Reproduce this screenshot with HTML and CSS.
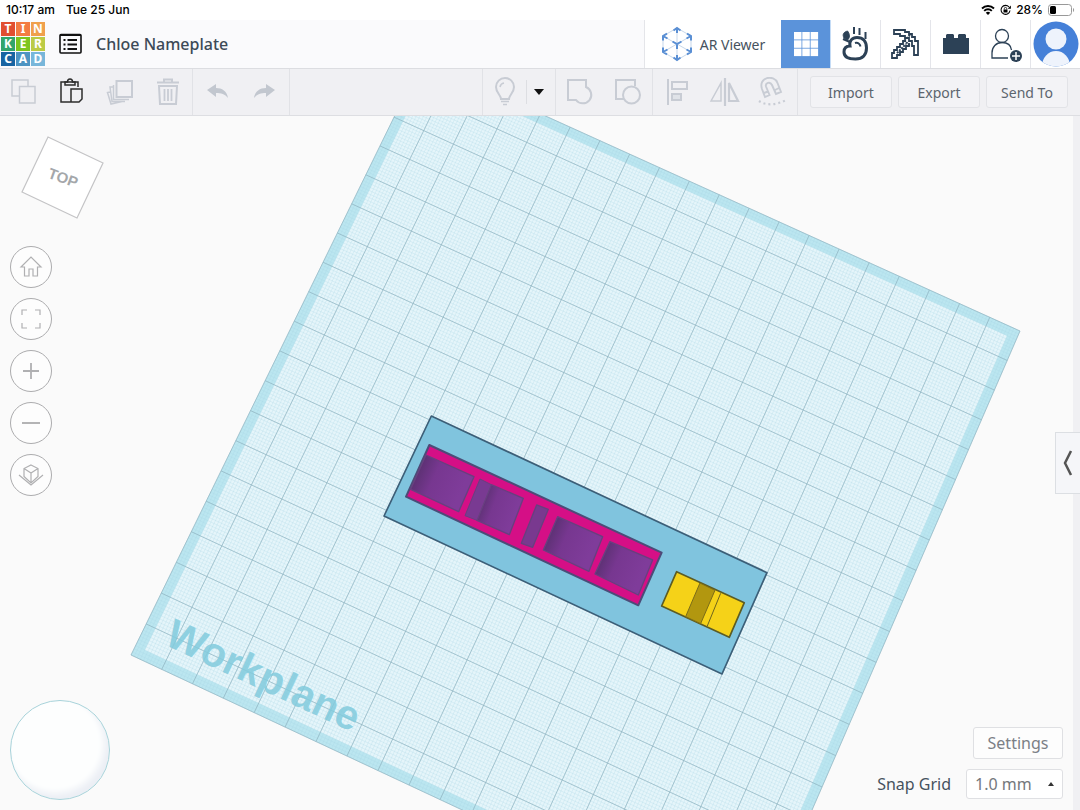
FILE: index.html
```html
<!DOCTYPE html>
<html lang="en">
<head>
<meta charset="UTF-8">
<meta name="viewport" content="width=device-width, initial-scale=1">
<title>Chloe Nameplate</title>
<link rel="stylesheet" href="styles.css">
<script src="workplane.js" defer></script>
</head>
<body>
<div class="status">
    <span>10:17 am</span>
    <span>Tue 25 Jun</span>
    <div class="status-right">
        <svg width="14" height="12" viewBox="0 0 14 12"><path d="M1 4.500a8.500 8.500 0 0 1 12 0M3.200 6.800a5.400 5.400 0 0 1 7.600 0" fill="none" stroke="#000" stroke-width="1.900"/><path d="M4.800 8.700a3.200 3.200 0 0 1 4.400 0L7 11z"/></svg>
        <svg width="11" height="12" viewBox="0 0 11 12"><path d="M9 3a4.500 4.500 0 1 0 1 3.500" fill="none" stroke="#000" stroke-width="1.100"/><path d="M10.900 1.500v3.200H7.700z"/><rect x="3.500" y="5.500" width="4" height="3"/><path d="M4.300 5.500V4.600a1.200 1.200 0 0 1 2.400 0v.9" fill="none" stroke="#000" stroke-width=".8"/></svg>
        <span>28%</span>
        <svg width="27" height="12" viewBox="0 0 27 12"><rect x=".5" y=".5" width="23" height="11" rx="3" fill="none" stroke="#999"/><rect x="2" y="2" width="6" height="8" rx="1.500"/><path d="M25 4v4c1.500-.7 1.500-3.300 0-4z" fill="#999"/></svg>
    </div>
</div>

<header class="header">
    <a class="logo" href="#" aria-label="Tinkercad">
        <span class="t1">T</span><span class="t2">I</span><span class="t3">N</span>
        <span class="t4">K</span><span class="t5">E</span><span class="t6">R</span>
        <span class="t7">C</span><span class="t8">A</span><span class="t9">D</span>
    </a>
    <button class="menu" aria-label="Designs">
        <svg width="24" height="22" viewBox="0 0 24 22" fill="none" stroke="#111"><rect x="1" y="1.500" width="21" height="18.500" rx="1" stroke-width="1.600"/><path d="M1 2h21" stroke-width="2"/><path d="M8.500 7h9.500M8.500 11.500h9.500M8.500 16h9.500" stroke-width="2"/><path d="M4.500 7h2M4.500 11.500h2M4.500 16h2" stroke-width="2"/></svg>
    </button>
    <h1 class="title">Chloe Nameplate</h1>
    <nav class="nav">
        <button class="ar">
            <svg width="32" height="36" viewBox="0 0 32 36" fill="none"><path d="M16 2L30 10v16L16 34L2 26V10zM2 10l14 8 14-8M16 18v16M2 26l14-8 14 8M16 2v16" stroke="#b9cde4" stroke-width=".8"/><path d="M12.500 4.500L16 2l3.500 2.500M16 2v5M2 14.500V10l4-2.300M2 10l4.500 2.500M30 14.500V10l-4-2.300M30 10l-4.500 2.500M2 21.500V26l4 2.300M2 26l4.500-2.500M30 21.500V26l-4 2.300M30 26l-4.500-2.500M12.500 31.500L16 34l3.500-2.500M16 34v-5M11.500 15.500L16 18l4.500-2.500M16 18v5" stroke="#5a8fd4" stroke-width="2"/></svg>
            AR Viewer
        </button>
        <button class="mode active" aria-label="3D Design">
            <svg width="26" height="26" viewBox="0 0 26 26" fill="#fff"><rect x="1" y="1" width="7.500" height="7.500"/><rect x="9.300" y="1" width="7.500" height="7.500"/><rect x="17.600" y="1" width="7.500" height="7.500"/><rect x="1" y="9.300" width="7.500" height="7.500"/><rect x="9.300" y="9.300" width="7.500" height="7.500"/><rect x="17.600" y="9.300" width="7.500" height="7.500"/><rect x="1" y="17.600" width="7.500" height="7.500"/><rect x="9.300" y="17.600" width="7.500" height="7.500"/><rect x="17.600" y="17.600" width="7.500" height="7.500"/></svg>
        </button>
        <button class="mode" aria-label="Sim Lab">
            <svg width="28" height="36" viewBox="0 0 28 36" fill="none" stroke="#2c4156"><path d="M8 20C7 15 10 11.500 15 11.500c6 0 9.500 4 9.500 10.500 0 7-4 11-11 11-7 0-11.500-2-11.500-7 0-4 2.500-6 6-6z" stroke-width="3"/><path d="M13 17c3-1 5 1 5.500 3.500" stroke-width="2"/><path d="M12 1v7M17.500 2v7M23.500 6v7" stroke-width="2"/><path d="M2 12C0 8 2 6 5.500 5 8 8 8 12 5.500 14z" fill="#2c4156"/><path d="M1 13l7 3" stroke-width="2"/></svg>
        </button>
        <button class="mode" aria-label="Blocks">
            <svg width="32" height="32" viewBox="0 0 32 32" fill="none" stroke="#2c4156"><path d="M4 2h11v2h4v2h3v3h3v4h3v14h-4v-9h-2v-5h-3v-3h-4V8h-5V6H4z" stroke-width="1.800"/><path d="M16 13h-3v3h-3v3H7v3H4v3H2v5h5v-3h3v-3h3v-3h3v-3h3v-3" stroke-width="1.800"/><path d="M20 7L13 14M7 25l9-9M14 12l6 6" stroke-width="2" stroke-dasharray="2 1"/></svg>
        </button>
        <button class="mode" aria-label="Bricks">
            <svg width="28" height="22" viewBox="0 0 28 22"><path d="M1 21V5h3V2l1-1h6l1 1v3h4V2l1-1h6l1 1v3h3v16z" fill="#2c4156"/></svg>
        </button>
        <button class="mode" aria-label="Invite people">
            <svg width="34" height="36" viewBox="0 0 34 36"><g fill="none" stroke="#2c4156" stroke-width="1.300"><circle cx="13" cy="10" r="6.500"/><path d="M19 32H3v-5c0-6 4-10.500 10-10.500S22 20 22.500 24"/></g><circle cx="27" cy="30" r="6" fill="#2c4156"/><path d="M23 30h8M27 26v8" stroke="#fff" stroke-width="1.500"/></svg>
        </button>
        <button class="mode" aria-label="Account">
            <svg width="46" height="46" viewBox="0 0 46 46"><defs><clipPath id="face"><circle cx="23" cy="23" r="22.500"/></clipPath></defs><g clip-path="url(#face)"><path d="M0 0h46v46H0z" fill="#4580d8"/><circle cx="23" cy="18" r="10.500" fill="#eef3fc"/><ellipse cx="23" cy="45" rx="14" ry="15" fill="#eef3fc"/></g></svg>
        </button>
    </nav>
</header>

<div class="toolbar">
    <div class="group">
        <button class="tool" aria-label="Copy"><svg width="28" height="28" viewBox="0 0 28 28"><path d="M9 18H2V2h16v6M9.500 8.500H25V25H9.500z"/></svg></button>
        <button class="tool dark" aria-label="Paste"><svg width="28" height="28" viewBox="0 0 28 28"><path d="M13 24H3V4h17v5M13 11h11v10l-3 3h-8z"/><path d="M7 7V4h2.500c0-4 5-4 5 0H17v3z"/></svg></button>
        <button class="tool" aria-label="Duplicate"><svg width="28" height="28" viewBox="0 0 28 28"><path d="M10.500 3H26v16H10.500z" stroke-width="2"/><path d="M7.500 7v14.500H23M7 9H4l2 14.500 13 0M4 14l-2.500.500L5 26l11-2.500"/></svg></button>
        <button class="tool" aria-label="Delete"><svg width="28" height="28" viewBox="0 0 28 28"><path d="M3 4.500h22M10 4V1.500h8V4" stroke-width="2"/><path d="M5 8l1 18h16l1-18z" stroke-width="2"/><path d="M10.500 11v12M14 11v12M17.500 11v12" stroke-width="1.800"/></svg></button>
    </div>
    <div class="group">
        <button class="tool" aria-label="Undo"><svg width="24" height="22" viewBox="0 0 24 22"><path class="solid" d="M2 9l9-6v4c6 0 11 3 12 10-3-4-7-5-12-5v4z"/></svg></button>
        <button class="tool" aria-label="Redo"><svg width="24" height="22" viewBox="0 0 24 22"><path class="solid" d="M22 9l-9-6v4C7 7 2 10 1 17c3-4 7-5 12-5v4z"/></svg></button>
    </div>
    <div class="group spacer"></div>
    <div class="group">
        <button class="tool bulb" aria-label="Show all"><svg width="24" height="30" viewBox="0 0 24 30"><path d="M8 22c0-4-5-6-5-12a9 9 0 0 1 18 0c0 6-5 8-5 12z" stroke-width="2"/><path d="M7 10a5 5 0 0 1 4-4M8 24.500h8M10 27.500h4"/></svg></button>
        <button class="tool drop" aria-label="Visibility options"><svg width="10" height="6" viewBox="0 0 10 6"><path d="M0 0h10L5 6z" fill="#111" stroke="none"/></svg></button>
    </div>
    <div class="group">
        <button class="tool" aria-label="Group"><svg width="28" height="28" viewBox="0 0 28 28"><path d="M2 2h18v7a8.500 8.500 0 1 1-10 13H2z" stroke-width="2"/></svg></button>
        <button class="tool" aria-label="Ungroup"><svg width="28" height="28" viewBox="0 0 28 28"><path d="M10 21H2V2h19v6" stroke-width="2"/><circle cx="17.500" cy="17" r="8.500" stroke-width="2"/></svg></button>
    </div>
    <div class="group">
        <button class="tool" aria-label="Align"><svg width="24" height="28" viewBox="0 0 24 28"><path d="M3 1v26M7 4h15v7H7z" stroke-width="2"/><path d="M7 16h9v6H7z" stroke-width="2" class="half"/></svg></button>
        <button class="tool" aria-label="Mirror"><svg width="32" height="30" viewBox="0 0 32 30"><path d="M2 24L12 6v18z"/><path d="M16 1v28M20 6l9 18h-9z" stroke-width="2.200"/></svg></button>
        <button class="tool" aria-label="Cruise"><svg width="32" height="30" viewBox="0 0 32 30"><path d="M8 20L5 12C1 0 17-3 20.500 6L24 15l-5 2-4-9c-2-4-7-2-6 1.500l3.500 8.500zM7 16l4-1.500M18 13l4-2" stroke-width="1.900"/><path d="M2 24c7 5 18 4 27-1" stroke-width="2.200" stroke-dasharray="2 3"/></svg></button>
    </div>
    <div class="actions">
        <button class="action">Import</button>
        <button class="action">Export</button>
        <button class="action">Send To</button>
    </div>
</div>

<main class="stage">
    <svg class="scene" viewBox="0 116 1080 694" preserveAspectRatio="xMidYMid slice" aria-label="Workplane">
        <defs>
            <linearGradient id="hole" x1="0" y1=".3" x2="1" y2=".7">
                <stop offset=".05" stop-color="#58306f"/>
                <stop offset=".35" stop-color="#773790"/>
                <stop offset=".8" stop-color="#7f3c9a"/>
            </linearGradient>
        </defs>
        <g id="plane"></g>
        <text class="plane-label" transform="translate(163 644) rotate(25)">Workplane</text>
        <!-- nameplate, drawn at three times its size -->
        <g transform="translate(380 400) scale(.3333)" stroke-linejoin="round">
            <path d="M154 48L1161 518 1026 822 12 348z" fill="#80c4de" stroke="#3c5f78" stroke-width="5"/>
            <path d="M148 135L845 458 775 616 78 290z" fill="#d50f86" stroke="#4c4c78" stroke-width="6"/>
            <g fill="url(#hole)" stroke="#67407f" stroke-width="4">
                <path d="M138 165L282 230 236 335 92 268z"/>
                <path d="M334 254L430 295 388 404 291 361z"/>
                <path d="M533 350L668 410 627 514 490 450z"/>
                <path d="M690 425L818 480 775 585 645 522z"/>
            </g>
            <path d="M300 237L334 254 291 361 255 347z" fill="#793a92" stroke="#67407f" stroke-width="3"/>
            <path d="M470 315L505 328 458 442 424 430z" fill="#79398f" stroke="#67407f" stroke-width="4"/>
            <path d="M890 515L1093 608 1048 712 845 618z" fill="#f5d218" stroke="#5c5c24" stroke-width="5"/>
            <path d="M960 549L1005 571 962 671 917 650z" fill="#b2970f" stroke="#7a6b18" stroke-width="3"/>
            <path d="M1022 580L982 678" stroke="#6e641c" stroke-width="3"/>
        </g>
    </svg>

    <div class="controls">
        <button class="cube" aria-label="View cube">
            <svg width="84" height="84" viewBox="0 0 84 84"><path d="M27 1L82 27 56 82 1 56z" fill="#fff" stroke="#c4c4c6" stroke-width="1.200"/><text class="cube-label" x="42" y="47" text-anchor="middle" transform="rotate(20 42 42)">TOP</text></svg>
        </button>
        <button class="round" aria-label="Home view"><svg width="24" height="24" viewBox="0 0 24 24"><path d="M2 12L12 2l10 10h-3.500v9H14v-7h-4v7H5.500v-9z"/></svg></button>
        <button class="round" aria-label="Fit all in view"><svg width="24" height="24" viewBox="0 0 24 24"><path d="M3 8V3h5M16 3h5v5M21 16v5h-5M8 21H3v-5"/></svg></button>
        <button class="round" aria-label="Zoom in"><svg width="24" height="24" viewBox="0 0 24 24"><path d="M4 12h16M12 4v16" stroke-width="1.800"/></svg></button>
        <button class="round" aria-label="Zoom out"><svg width="24" height="24" viewBox="0 0 24 24"><path d="M3 12h18" stroke-width="1.900"/></svg></button>
        <button class="round" aria-label="Perspective view"><svg width="26" height="24" viewBox="0 0 26 24"><path d="M13 2l7 3.500v8L13 20l-7-6.500v-8zM6 5.500L13 10l7-4.500M13 10v10"/><path d="M1 12l12 10 12-10"/></svg></button>
    </div>

    <button class="joystick" aria-label="Move view"></button>

    <div class="rail"></div>
    <button class="expand" aria-label="Show shapes"><svg width="12" height="28" viewBox="0 0 12 28"><path d="M9 2L3 14l6 12" fill="none" stroke="#555" stroke-width="2.500"/></svg></button>

    <div class="settings">
        <button class="settings-button">Settings</button>
        <div class="snap">
            <label for="snap">Snap Grid</label>
            <div class="snap-box">
                <select id="snap"><option>1.0 mm</option></select>
                <svg width="6" height="4" viewBox="0 0 6 4"><path d="M0 4h6L3 0z" fill="#333"/></svg>
            </div>
        </div>
    </div>
</main>
</body>
</html>
```
FILE: styles.css
```css
* {box-sizing: border-box;}
body {margin: 0; height: 100vh; display: flex; flex-direction: column; overflow: hidden; font-family: "Noto Sans", "Open Sans", sans-serif; color: #46525e; background: #fafafa;}
button {font: inherit; color: inherit; background: none; border: 0; padding: 0; margin: 0; display: flex; align-items: center; justify-content: center; cursor: pointer;}
svg {display: block; flex: none;}

/* tablet status line */
.status {height: 20px; display: flex; align-items: center; gap: 11px; padding: 0 5px 0 6px; background: #fff; color: #000; font: 500 12px/20px Inter, sans-serif;}
.status-right {margin-left: auto; display: flex; align-items: center; gap: 5px;}

.header {height: 49px; flex: none; display: flex; align-items: center; background: #fafafc; border-bottom: 1px solid #dcdde1;}
.logo {display: grid; grid-template-columns: repeat(3, 14px); grid-auto-rows: 14px; gap: 1px; padding: 0 1px; text-decoration: none; color: #fff; font-size: 12px; font-weight: 700; line-height: 14px; text-align: center;}
.t1 {background: #e14e31;}
.t2 {background: #f37c42;}
.t3 {background: #f0a04c;}
.t4 {background: #32a56c;}
.t5 {background: #7cc51e;}
.t6 {background: #bccb45;}
.t7 {background: #1864a2;}
.t8 {background: #4e94c2;}
.t9 {background: #78b6da;}
.menu {margin: 0 13px 0 13px;}
.title {margin: 0; font-size: 16px; font-weight: 500; color: #3d4a57;}
.nav {margin-left: auto; align-self: stretch; display: flex; background: #fff; border-left: 1px solid #e4e5e9;}
.ar {width: 136px; gap: 7px; font-size: 14px; white-space: nowrap;}
.mode {width: 50px; border-right: 1px solid #e4e5ea;}
.mode:last-child {width: 49px; border-right: 0;}
.active {background: #5b93da; border-color: #c5dcf6;}

.toolbar {height: 47px; flex: none; display: flex; background: #f0f0f3; border-bottom: 1px solid #dddee2;}
.group {display: flex; border-right: 1px solid #e1e2e6;}
.spacer {flex: 1;}
.tool {width: 48px;}
.tool svg {fill: none; stroke: #c8ccd4; stroke-width: 1.5;}
.tool .solid {fill: #c2c7cf; stroke: none;}
.tool .half {fill: #e0e3e8;}
.dark svg {stroke: #2d2d2d;}
.bulb {width: 43px;}
.drop {width: 29px; height: 24px; align-self: center; border-left: 1px solid #dddee2; padding-right: 4px;}
.actions {display: flex; align-items: center; gap: 6px; padding: 0 12px;}
.action {width: 82px; height: 32px; border: 1px solid #e2e3e7; border-radius: 3px; background: #f3f3f6; font-size: 14px; color: #5c656e;}

.stage {position: relative; flex: 1; min-height: 0;}
.scene {width: 100%; height: 100%;}
.surface {fill: #e5f5fa;}
.band {fill: #bbe6f0;}
.fine {fill: none; stroke: #a6d4e4; stroke-width: 1; opacity: .26;}
.coarse {fill: none; stroke: #90b4c1; stroke-width: 1; opacity: .7;}
.plane-label {font: 700 41px "Liberation Sans", Arial, sans-serif; fill: #82cbdd; opacity: .85;}

.controls {position: absolute; left: 10px; top: 20px; display: flex; flex-direction: column; gap: 10px;}
.cube {margin: 0 0 16px 11px;}
.cube-label {font: 700 15px "Liberation Sans", Arial, sans-serif; fill: #a4a7aa;}
.round {width: 42px; height: 42px; border: 1px solid #acacae; border-radius: 50%; background: #fdfdfd;}
.round svg {fill: none; stroke: #b0b0b2; stroke-width: 1.2;}
.joystick {position: absolute; left: 10px; bottom: 10px; width: 100px; height: 100px; border: 1px solid #a8d3da; border-radius: 50%; background: #fdfefe; box-shadow: inset -5px -6px 6px #eceff5;}
.rail {position: absolute; right: 0; top: 0; bottom: 0; width: 7px; background: #f0f0f3;}
.expand {position: absolute; right: 0; top: 316px; width: 25px; height: 62px; border: 1px solid #dcdfe3; border-right: 0; background: #f5f6f9;}
.settings {position: absolute; right: 17px; bottom: 11px; display: flex; flex-direction: column; align-items: flex-end; gap: 10px; font-size: 16px;}
.settings-button {width: 90px; height: 32px; border: 1px solid #dfe0e3; border-radius: 3px; background: #fdfdfd; color: #7b8086;}
.snap {display: flex; align-items: center; gap: 15px;}
.snap-box {display: flex; align-items: center; width: 97px; height: 30px; padding: 0 8px; border: 1px solid #dfe0e3; border-radius: 3px; background: #fff;}
.snap-box select {flex: 1; min-width: 0; appearance: none; border: 0; padding: 0; background: none; font: inherit; color: #74787d;}
```
FILE: workplane.js
```js
// corners of the plane on screen: top left, top right, bottom right, bottom left
const corners = [[422, 60], [1020, 331], [753, 946], [131, 655]];
const size = 200;

const [[x0, y0], [x1, y1], [x2, y2], [x3, y3]] = corners;
const ax = x1 - x2, ay = y1 - y2;
const bx = x3 - x2, by = y3 - y2;
const cx = x0 - x1 + x2 - x3, cy = y0 - y1 + y2 - y3;
const det = ax * by - bx * ay;
const g = (cx * by - bx * cy) / det;
const h = (ax * cy - cx * ay) / det;

// millimetres on the plane to screen position
function project(mmX, mmY) {
    const u = mmX / size, v = mmY / size;
    const w = g * u + h * v + 1;
    const x = ((x1 - x0 + g * x1) * u + (x3 - x0 + h * x3) * v + x0) / w;
    const y = ((y1 - y0 + g * y1) * u + (y3 - y0 + h * y3) * v + y0) / w;
    return x.toFixed(2) + ' ' + y.toFixed(2);
}

function square(inset) {
    const a = inset, b = size - inset;
    return 'M' + [project(a, a), project(b, a), project(b, b), project(a, b)].join('L') + 'z';
}

function grid(step) {
    let d = '';
    for (let i = 0; i <= size; i += step) {
        d += 'M' + project(i, 0) + 'L' + project(i, size);
        d += 'M' + project(0, i) + 'L' + project(size, i);
    }
    return d;
}

document.getElementById('plane').innerHTML =
    '<path class="band" d="' + square(0) + '"/>' +
    '<path class="surface" d="' + square(3) + '"/>' +
    '<path class="fine" d="' + grid(1) + '"/>' +
    '<path class="coarse" d="' + grid(10) + '"/>';
```
